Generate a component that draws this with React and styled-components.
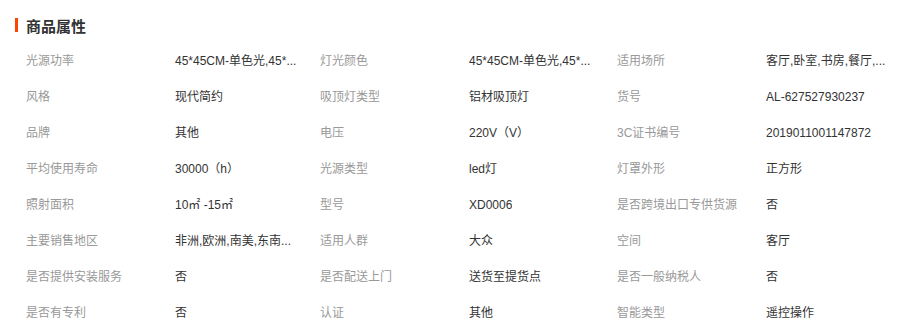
import React from 'react';
import styled, { createGlobalStyle } from 'styled-components';

const GlobalStyle = createGlobalStyle`
  body {
    margin: 0;
    background: #fff;
    font-family: "Liberation Sans", "Noto Sans CJK SC", sans-serif;
  }
`;

const Wrapper = styled.div`
  padding: 15px 16px 0 15px;
`;

const Title = styled.h3`
  margin: 0;
  display: flex;
  align-items: center;
  height: 20px;
  font-size: 15px;
  font-weight: bold;
  color: #333;
`;

const Mark = styled.span`
  display: inline-block;
  width: 3px;
  height: 14px;
  background-color: #f40;
  margin-right: 8px;
`;

const List = styled.ul`
  list-style: none;
  margin: 8px 0 0 0;
  padding: 0 0 0 11px;
  display: grid;
  grid-template-columns: 294px 297px 290px;
`;

const Item = styled.li`
  display: flex;
  height: 36px;
  line-height: 36px;
  font-size: 12px;
`;

const Label = styled.span`
  width: 149px;
  flex-shrink: 0;
  color: #999;
  white-space: nowrap;
`;

const Value = styled.span`
  max-width: 125px;
  color: #333;
  white-space: nowrap;
  overflow: hidden;
  text-overflow: ellipsis;
`;

// values as the page shows them (long ones already cut)
const attrs = [
  ['光源功率', '45*45CM-单色光,45*...'],
  ['灯光颜色', '45*45CM-单色光,45*...'],
  ['适用场所', '客厅,卧室,书房,餐厅,...'],
  ['风格', '现代简约'],
  ['吸顶灯类型', '铝材吸顶灯'],
  ['货号', 'AL-627527930237'],
  ['品牌', '其他'],
  ['电压', '220V（V）'],
  ['3C证书编号', '2019011001147872'],
  ['平均使用寿命', '30000（h）'],
  ['光源类型', 'led灯'],
  ['灯罩外形', '正方形'],
  ['照射面积', '10㎡ -15㎡'],
  ['型号', 'XD0006'],
  ['是否跨境出口专供货源', '否'],
  ['主要销售地区', '非洲,欧洲,南美,东南...'],
  ['适用人群', '大众'],
  ['空间', '客厅'],
  ['是否提供安装服务', '否'],
  ['是否配送上门', '送货至提货点'],
  ['是否一般纳税人', '否'],
  ['是否有专利', '否'],
  ['认证', '其他'],
  ['智能类型', '遥控操作'],
];

export default function App() {
  return (
    <>
      <GlobalStyle />
      <Wrapper>
        <Title>
          <Mark />
          商品属性
        </Title>
        <List>
          {attrs.map(([label, value]) => (
            <Item key={label}>
              <Label>{label}</Label>
              <Value>{value}</Value>
            </Item>
          ))}
        </List>
      </Wrapper>
    </>
  );
}
